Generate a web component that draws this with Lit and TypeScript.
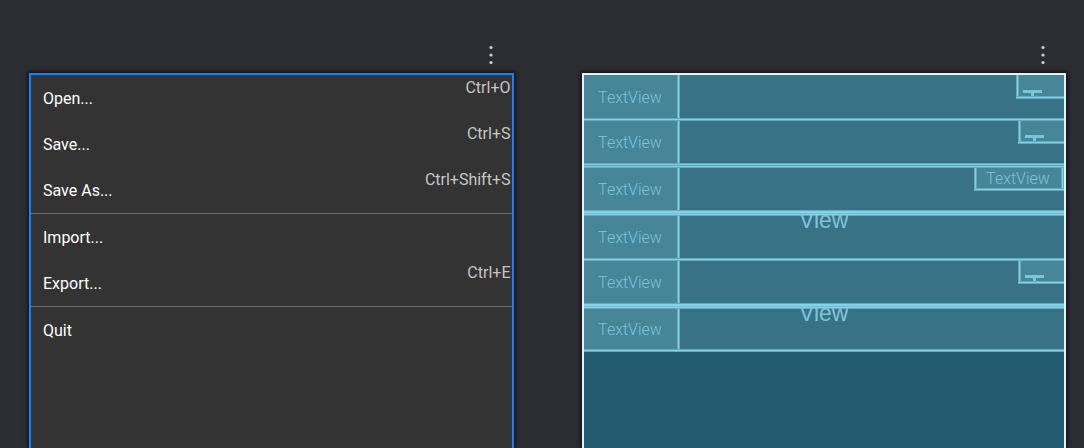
import { LitElement, html, css, nothing } from "lit";
import { customElement } from "lit/decorators.js";

interface MenuEntry {
  label: string;
  shortcut?: string;
  separated?: boolean;
}

const entries: MenuEntry[] = [
  { label: "Open...", shortcut: "Ctrl+O" },
  { label: "Save...", shortcut: "Ctrl+S" },
  { label: "Save As...", shortcut: "Ctrl+Shift+S" },
  { label: "Import...", separated: true },
  { label: "Export...", shortcut: "Ctrl+E" },
  { label: "Quit", separated: true },
];

const dots = html`<svg width="6" height="20" viewBox="0 0 6 20" aria-hidden="true">
  <circle cx="3" cy="2.5" r="1.6" /><circle cx="3" cy="10" r="1.6" /><circle cx="3" cy="17.5" r="1.6" />
</svg>`;

const surfaceStyles = css`
  :host { display: flex; flex-direction: column; min-width: 0; }
  .bar { display: flex; justify-content: flex-end; padding: 45px 20px 8px; }
  .more { display: flex; padding: 0; border: 0; background: none; fill: #cfd0d2; }
  .device {
    flex: 1; display: flex; flex-direction: column; box-sizing: border-box;
    border: 2px solid; border-bottom: 0; box-shadow: 0 0 4px 1px #0c0d0e;
  }
`;

@customElement("design-surface")
class DesignSurface extends LitElement {
  static styles = [surfaceStyles, css`
    .device { border-color: #1583f7; background: #333333; }
    .item {
      display: flex; justify-content: space-between; width: 100%; height: 46px;
      padding: 2px 1px 0 12px; border: 0; background: none; color: #ffffff;
      font: 16px/22px Roboto, sans-serif; text-align: left;
    }
    .label { align-self: center; }
    .shortcut { align-self: flex-start; color: #c6c6c6; }
    .separator { width: 100%; height: 1px; margin: 0; border: 0; background: #6e6e6e; }
  `];
  render() {
    return html`
      <div class="bar"><button class="more" aria-label="More">${dots}</button></div>
      <div class="device">
        ${entries.map((e) => html`
          ${e.separated ? html`<hr class="separator" />` : nothing}
          <button class="item">
            <span class="label">${e.label}</span>
            ${e.shortcut ? html`<span class="shortcut">${e.shortcut}</span>` : nothing}
          </button>`)}
      </div>`;
  }
}

@customElement("blueprint-surface")
class BlueprintSurface extends LitElement {
  static styles = [surfaceStyles, css`
    :host {
      --across: linear-gradient(#66a9bd 1px, #86d1e6 1px 2px, #66a9bd 2px);
      --down: linear-gradient(90deg, #66a9bd 1px, #86d1e6 1px 2px, #66a9bd 2px);
    }
    .device {
      border-color: #e4f2f5; background: #235c6e;
      color: #7cc4da; font: 300 16px/20px Roboto, sans-serif;
    }
    .row {
      display: flex; justify-content: space-between; align-items: flex-start;
      height: 42px; background: #387286;
    }
    .row:first-of-type { height: 43px; }
    .row:last-of-type { height: 40px; }
    .line { flex: none; height: 3px; background: var(--across); }
    .line.double {
      height: 5px;
      background: linear-gradient(#66a9bd 1px, #86d1e6 1px 2px, #5c9fb3 2px 3px, #86d1e6 3px 4px, #66a9bd 4px);
    }
    .line.view {
      display: flex; justify-content: center; align-items: flex-start; height: 6px;
      background: linear-gradient(#66a9bd 1px, #86d1e6 1px 3px, #74bed3 3px 4px, #86d1e6 4px 5px, #66a9bd 5px);
    }
    .view span {
      position: relative; top: -2px; clip-path: inset(5px 0 0);
      font: 23px/24px "Liberation Sans", sans-serif;
    }
    .cell {
      display: flex; align-items: center; justify-content: center; align-self: stretch;
      box-sizing: border-box; width: 96px; padding: 2px 3px 0 0;
      background: var(--down) right / 3px 100% no-repeat #478599;
    }
    .chip {
      display: flex; align-items: flex-end;
      box-sizing: border-box; width: 46px; height: 23px; padding: 0 0 3px 7px;
      background: var(--across) bottom / 100% 3px no-repeat, var(--down) left / 3px 100% no-repeat #478599;
    }
    .row:first-of-type .chip { width: 48px; height: 24px; }
    .chip.wide {
      align-items: center; justify-content: center; width: 90px; padding: 0 4px 1px 2px;
      background: var(--across) bottom / 100% 3px no-repeat, var(--down) right / 3px 100% no-repeat,
        var(--down) left / 3px 100% no-repeat #478599;
    }
    .chip svg { fill: #7cc4da; }
  `];
  line(next?: MenuEntry, index = 0) {
    if (next?.separated) return html`<div class="line view"><span>View</span></div>`;
    return html`<div class="line ${index === 1 ? "double" : ""}"></div>`;
  }
  render() {
    return html`
      <div class="bar"><button class="more" aria-label="More">${dots}</button></div>
      <div class="device">
        ${entries.map((e, i) => html`
          <section class="row">
            <div class="cell">TextView</div>
            ${!e.shortcut ? nothing : e.shortcut.length > 6
              ? html`<div class="chip wide">TextView</div>`
              : html`<div class="chip"><svg width="19" height="6" viewBox="0 0 19 6"><path d="M0 0h19v3h-8v3h-3v-3h-8z" /></svg></div>`}
          </section>
          ${this.line(entries[i + 1], i)}`)}
      </div>`;
  }
}

@customElement("app-root")
class AppRoot extends LitElement {
  static styles = css`
    :host {
      display: grid; grid-template-columns: 1fr 1fr; gap: 68px;
      box-sizing: border-box; height: 100vh; padding: 0 18px 0 29px; overflow: hidden;
      background: #2b2d30;
    }
  `;
  render() {
    return html`<design-surface></design-surface><blueprint-surface></blueprint-surface>`;
  }
}
